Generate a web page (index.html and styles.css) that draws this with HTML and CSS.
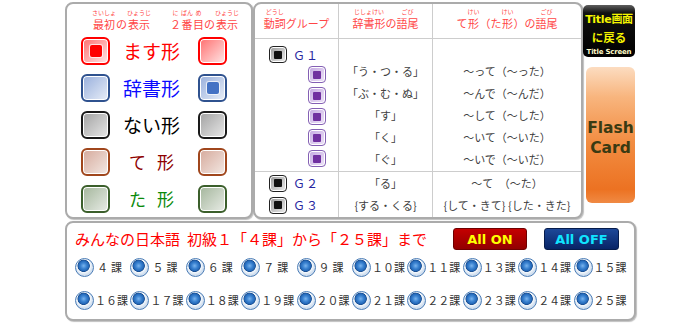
FILE: index.html
```html
<!DOCTYPE html>
<html lang="ja">
<head>
<meta charset="utf-8">
<title>Flash Card Settings</title>
<link rel="stylesheet" href="styles.css">
</head>
<body>
<div class="page">
  <div class="top">
    <section class="panel left">
      <div class="lhead">
        <div class="rh lh1">
          <span class="rb"><span class="rt">さいしょ</span><span>最初</span></span><span>の</span><span class="rb"><span class="rt">ひょうじ</span><span>表示</span></span>
        </div>
        <div class="rh lh2">
          <span class="rb"><span class="rt">に</span><span>２</span></span><span class="rb"><span class="rt">ばん</span><span>番</span></span><span class="rb"><span class="rt">め</span><span>目</span></span><span>の</span><span class="rb"><span class="rt">ひょうじ</span><span>表示</span></span>
        </div>
      </div>
      <div class="forms">
        <div class="frow red"><span class="box on"></span><span class="fname">ます形</span><span class="box"></span></div>
        <div class="frow blue"><span class="box"></span><span class="fname">辞書形</span><span class="box on"></span></div>
        <div class="frow black"><span class="box"></span><span class="fname">ない形</span><span class="box"></span></div>
        <div class="frow brown"><span class="box"></span><span class="fname small">て　形</span><span class="box"></span></div>
        <div class="frow green"><span class="box"></span><span class="fname small">た　形</span><span class="box"></span></div>
      </div>
    </section>

    <section class="panel mid">
      <div class="th rh">
        <span class="rb"><span class="rt">どうし</span><span>動詞</span></span><span>グループ</span>
      </div>
      <div class="th rh">
        <span class="rb"><span class="rt">じしょけい</span><span>辞書形</span></span><span>の</span><span class="rb"><span class="rt">ごび</span><span>語尾</span></span>
      </div>
      <div class="th rh last">
        <span>て</span><span class="rb"><span class="rt">けい</span><span>形</span></span><span>（た</span><span class="rb"><span class="rt">けい</span><span>形</span></span><span>）の</span><span class="rb"><span class="rt">ごび</span><span>語尾</span></span>
      </div>

      <div class="td g1 c1">
        <div class="grp"><span class="chk"></span><span class="gname">Ｇ１</span></div>
        <div class="subs">
          <span class="pchk"></span><span class="pchk"></span><span class="pchk"></span><span class="pchk"></span><span class="pchk"></span>
        </div>
      </div>
      <div class="td g1 lines">
        <div class="ln">「う・つ・る」</div>
        <div class="ln">「ぶ・む・ぬ」</div>
        <div class="ln">「す」</div>
        <div class="ln">「く」</div>
        <div class="ln">「ぐ」</div>
      </div>
      <div class="td g1 lines last">
        <div class="ln">～って（～った）</div>
        <div class="ln">～んで（～んだ）</div>
        <div class="ln">～して（～した）</div>
        <div class="ln">～いて（～いた）</div>
        <div class="ln">～いで（～いだ）</div>
      </div>

      <div class="td g23 c1">
        <div class="grp row22"><span class="chk"></span><span class="gname">Ｇ２</span></div>
        <div class="grp row22"><span class="chk"></span><span class="gname">Ｇ３</span></div>
      </div>
      <div class="td g23 lines2">
        <div class="ln">「る」</div>
        <div class="ln">{する・くる}</div>
      </div>
      <div class="td g23 lines2 last">
        <div class="ln">～て　（～た）</div>
        <div class="ln">{して・きて} {した・きた}</div>
      </div>
    </section>

    <aside class="side">
      <div class="title-btn">
        <span class="t1">Title画面</span>
        <span class="t2">に戻る</span>
        <span class="t3">Title Screen</span>
      </div>
      <div class="flash"><span>Flash</span><span>Card</span></div>
    </aside>
  </div>

  <section class="panel bottom">
    <div class="bhead">
      <div class="btitle">みんなの日本語<span class="sp"></span>初級１「４課」から「２５課」まで</div>
      <div class="btns">
        <div class="btn allon">All ON</div>
        <div class="btn alloff">All OFF</div>
      </div>
    </div>
    <div class="lessons">
      <div class="item"><span class="radio"></span><span class="one">４課</span></div>
      <div class="item"><span class="radio"></span><span class="one">５課</span></div>
      <div class="item"><span class="radio"></span><span class="one">６課</span></div>
      <div class="item"><span class="radio"></span><span class="one">７課</span></div>
      <div class="item"><span class="radio"></span><span class="one">９課</span></div>
      <div class="item"><span class="radio"></span><span>１０課</span></div>
      <div class="item"><span class="radio"></span><span>１１課</span></div>
      <div class="item"><span class="radio"></span><span>１３課</span></div>
      <div class="item"><span class="radio"></span><span>１４課</span></div>
      <div class="item"><span class="radio"></span><span>１５課</span></div>
      <div class="item"><span class="radio"></span><span>１６課</span></div>
      <div class="item"><span class="radio"></span><span>１７課</span></div>
      <div class="item"><span class="radio"></span><span>１８課</span></div>
      <div class="item"><span class="radio"></span><span>１９課</span></div>
      <div class="item"><span class="radio"></span><span>２０課</span></div>
      <div class="item"><span class="radio"></span><span>２１課</span></div>
      <div class="item"><span class="radio"></span><span>２２課</span></div>
      <div class="item"><span class="radio"></span><span>２３課</span></div>
      <div class="item"><span class="radio"></span><span>２４課</span></div>
      <div class="item"><span class="radio"></span><span>２５課</span></div>
    </div>
  </section>
</div>
</body>
</html>
```

FILE: styles.css
```css
* { box-sizing: border-box; }
html, body { margin: 0; padding: 0; background: #fff; }
body {
  font-family: "Noto Sans CJK JP", "Noto Sans", sans-serif;
  width: 700px;
  height: 323px;
  overflow: hidden;
}

/* hand-built ruby: reading above base */
.rh { display: flex; align-items: flex-end; white-space: nowrap; }
.rb { display: inline-flex; flex-direction: column; align-items: center; }
.rt { font-size: 6px; line-height: 7px; margin-bottom: 2px; }

.page {
  padding: 2px 0 0 65px;
  display: flex;
  flex-direction: column;
  gap: 2px;
  width: 636px;
}
.top { display: flex; height: 217px; }

.panel {
  border: 2px solid #ababab;
  border-radius: 8px;
  background: #fff;
  box-shadow: 1px 1px 1px rgba(0, 0, 0, 0.25);
}

/* ---------- left panel ---------- */
.left { width: 188px; }
.lhead {
  height: 30px;
  display: flex;
  align-items: flex-end;
  padding: 0 0 3px 25px;
  font-size: 11px;
  line-height: 13px;
  color: #ff4646;
}
.lh1 { width: 78px; }
.forms {
  margin-top: 3px;
  padding-left: 14px;
  display: flex;
  flex-direction: column;
  gap: 9px;
}
.frow {
  display: grid;
  grid-template-columns: 29px 88px 29px;
  height: 28px;
  align-items: center;
}
.fname {
  text-align: center;
  font-size: 19px;
  line-height: 28px;
  padding-right: 5px;
  white-space: nowrap;
}
.fname.small { font-size: 17px; letter-spacing: -3px; padding-right: 8px; }
.box {
  width: 29px;
  height: 28px;
  border: 2px solid;
  border-radius: 6px;
  display: flex;
  align-items: center;
  justify-content: center;
  box-shadow: inset 0 0 0 1px #fff;
}
.box.on::after {
  content: "";
  width: 12px;
  height: 12px;
  border-radius: 2px;
  box-shadow: 0 0 0 1px rgba(255, 255, 255, 0.7);
}
.red .fname { color: #ff0000; }
.red .box { border-color: #ff0000; background: linear-gradient(135deg, #ff7070, #ffe6e6); }
.red .box.on::after { background: #ff0000; }
.blue .fname { color: #0a0aff; }
.blue .box { border-color: #2f528f; background: linear-gradient(135deg, #98afdc, #e8eef8); }
.blue .box.on::after { background: #4472c4; }
.black .fname { color: #000; }
.black .box { border-color: #1a1a1a; background: linear-gradient(135deg, #a2a2a2, #e8e8e8); }
.brown .fname { color: #8e0000; }
.brown .box { border-color: #a0461c; background: linear-gradient(135deg, #d6aa9c, #f3e8e3); }
.green .fname { color: #0a8a0a; }
.green .box { border-color: #3b5f2b; background: linear-gradient(135deg, #a4b69c, #e8ece6); }

/* ---------- middle table ---------- */
.mid {
  width: 330px;
  display: grid;
  grid-template-columns: 84px 94px 1fr;
  grid-template-rows: 35px 133px 1fr;
  overflow: hidden;
}
.th {
  justify-content: center;
  padding-bottom: 8px;
  font-size: 11px;
  line-height: 13px;
  color: #ff4646;
  border-bottom: 1px solid #cdcdcd;
  border-right: 1px solid #cdcdcd;
}
.td { border-right: 1px solid #cdcdcd; }
.td.g1 { border-bottom: 1px solid #cdcdcd; }
.th.last, .td.last { border-right: none; }

.c1.g1 { padding: 7px 12px 0 14px; }
.c1.g23 { padding: 0 12px 0 14px; }
.grp { display: flex; align-items: center; gap: 6px; height: 17px; }
.grp.row22 { height: 22px; }
.gname { color: #2626a0; font-size: 12px; line-height: 1; letter-spacing: 1px; }
.chk {
  width: 18px;
  height: 17px;
  border: 1.5px solid #222;
  border-radius: 4px;
  background: linear-gradient(135deg, #9a9a9a, #ececec);
  box-shadow: inset 0 0 0 1px #fff;
  display: flex;
  align-items: center;
  justify-content: center;
}
.chk::after {
  content: "";
  width: 8px;
  height: 8px;
  border-radius: 1px;
  background: #111;
}
.subs {
  margin-top: 3px;
  display: flex;
  flex-direction: column;
  align-items: flex-end;
  gap: 4px;
}
.pchk {
  width: 18px;
  height: 17px;
  border: 1.5px solid #8460b4;
  border-radius: 4px;
  background: linear-gradient(135deg, #c4a9e2, #eee5f7);
  box-shadow: inset 0 0 0 1px #fff;
  display: flex;
  align-items: center;
  justify-content: center;
}
.pchk::after {
  content: "";
  width: 8px;
  height: 8px;
  border-radius: 1px;
  background: #7030a0;
}
.lines { padding-top: 21px; }
.ln {
  height: 22px;
  line-height: 22px;
  text-align: center;
  font-size: 11px;
  color: #404040;
  white-space: nowrap;
}

/* ---------- side buttons ---------- */
.side {
  width: 52px;
  display: flex;
  flex-direction: column;
  align-items: flex-end;
}
.title-btn {
  width: 52px;
  height: 52px;
  margin-top: 3px;
  padding-top: 7px;
  border-radius: 5px;
  background: linear-gradient(#5e5e5e 0, #101010 8px, #000 100%);
  display: flex;
  flex-direction: column;
  align-items: center;
  font-weight: bold;
  color: #f4f400;
  font-family: "DejaVu Sans", "Noto Sans CJK JP", sans-serif;
  white-space: nowrap;
}
.t1 { font-size: 11px; line-height: 16px; letter-spacing: -0.3px; }
.t2 { font-family: "Noto Sans CJK JP", sans-serif; font-size: 11.5px; line-height: 19px; }
.t3 { font-size: 7px; line-height: 10px; color: #fffbc8; letter-spacing: -0.2px; }
.flash {
  width: 49px;
  height: 136px;
  margin-top: 10px;
  padding-top: 6px;
  border-radius: 6px;
  background: linear-gradient(#fcdcc0 0%, #f8b57e 22%, #f28d42 55%, #ec7222 90%, #f08a44 100%);
  color: #3a3a12;
  font-family: "DejaVu Sans", sans-serif;
  font-weight: bold;
  font-size: 15.5px;
  line-height: 20px;
  display: flex;
  flex-direction: column;
  align-items: center;
  justify-content: center;
}

/* ---------- bottom panel ---------- */
.bottom {
  width: 571px;
  height: 100px;
  padding: 5px 15px 0 8px;
}
.bhead { display: flex; align-items: center; height: 22px; }
.btitle {
  font-size: 15px;
  line-height: 22px;
  color: #ff0000;
  white-space: nowrap;
}
.sp { display: inline-block; width: 7px; }
.btns { margin-left: auto; display: flex; gap: 17px; }
.btn {
  height: 22px;
  border-radius: 3px;
  border: 1px solid;
  display: flex;
  align-items: center;
  justify-content: center;
  font-family: "DejaVu Sans", sans-serif;
  font-weight: bold;
  font-size: 13px;
}
.allon {
  width: 74px;
  background: linear-gradient(#c40000, #920000);
  border-color: #6e0000;
  color: #ffff00;
}
.alloff {
  width: 75px;
  background: linear-gradient(#1d4898, #082466);
  border-color: #061c4c;
  color: #10e4ff;
}
.lessons {
  margin-top: 8px;
  display: grid;
  grid-template-columns: repeat(10, 55.4px);
  row-gap: 15px;
}
.item {
  display: flex;
  align-items: center;
  gap: 1px;
  height: 18px;
  font-size: 11px;
  color: #333;
  white-space: nowrap;
}
.one { padding-left: 2px; letter-spacing: 3px; }
.radio {
  flex: none;
  width: 19px;
  height: 19px;
  border-radius: 50%;
  border: 1.5px solid #4a7cb6;
  background: radial-gradient(circle at 45% 40%, #7ab4ee 0, #3a82d0 3px, #2468b8 5px, #1a4e90 5.8px, #f4f8fc 6.5px, #d2e0f0 9px);
}
```
